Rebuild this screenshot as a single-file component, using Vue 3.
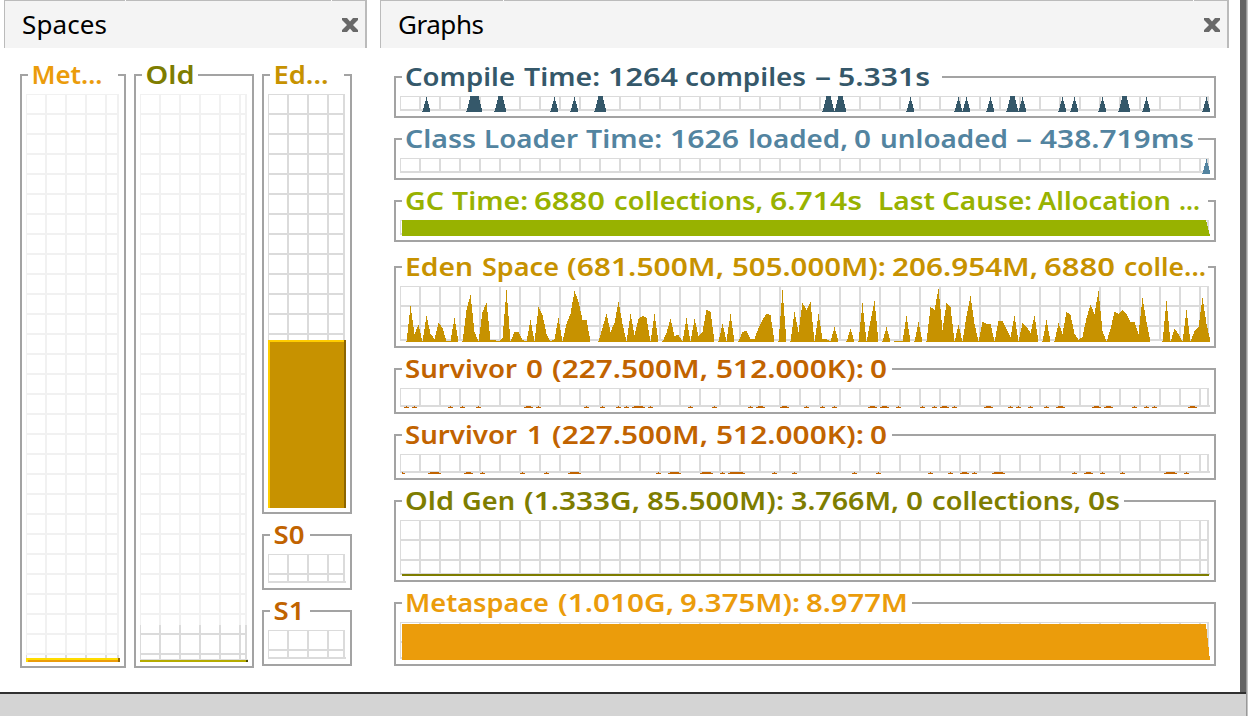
<script setup>
const run = (x0, vals) => vals.map((v, i) => [x0 - 400 + i * 4, v])

const edenSamples = [
  ...run(406, [0, 36, 8, 17, 0, 26, 8, 3, 19, 14, 0, 1, 24, 0, 0, 32, 47, 10, 0, 30, 39, 2, 2, 0, 4, 52, 0, 10, 10, 2, 0, 22, 0, 35, 27, 8, 0, 3, 24, 0, 18, 28, 51, 40, 22, 22, 0, 0, 0, 14, 28, 10, 19, 40, 18, 0, 28, 7, 23, 26, 24, 0, 28, 0, 0, 9, 23]),
  ...run(674, [6, 7, 0, 24, 0, 23, 6, 10, 32, 30, 0, 0, 18, 1, 28, 0, 0, 10, 11, 3, 3, 14, 22, 28, 27, 0, 0, 52, 0, 0, 30, 10, 39, 32, 40, 0, 28, 3, 3, 0, 15, 0, 0, 0, 13, 0, 0, 39, 0, 21, 41, 0, 0, 15, 0, 0, 1, 0, 26, 0, 0, 20, 0, 0, 35, 32, 53, 12]),
  ...run(946, [39, 35, 0, 17, 0, 26, 46, 18, 0, 20, 18, 18, 0, 21, 21, 13, 5, 26, 0, 19, 15, 9, 26, 0, 0, 22, 0, 0, 19, 8, 30, 27, 8, 2, 5, 24, 37, 28, 51, 11, 0, 13, 30, 28, 32, 28, 20, 20, 8, 44, 20, 0, 0, 0, 0, 41, 0, 13, 8, 0, 32, 0, 11, 15, 44, 18, 0]),
]

// one pixel-wide column per x, interpolated between neighbouring samples
const area = (points, h) => {
  let d = ''
  for (let i = 0; i < points.length - 1; i++) {
    const [x, a] = points[i]
    const [next, b] = points[i + 1]
    if (!a && !b) continue
    for (let k = 0; k < next - x; k++) {
      const v = Math.max(1, Math.round(a + (b - a) * k / (next - x)))
      d += `M${x + k} ${h - v}h1V${h}h-1z`
    }
  }
  return d
}

// [first, last] x of every burst; a burst rises and falls over one 4px sample
const bursts = list => list.map(([a, b]) => {
  const s = a - 400, e = b - 400, top = b - a === 8 ? 15 : 16
  return area([[s, 0], [s + 4, top], ...(e - 4 > s + 4 ? [[e - 4, top]] : []), [e, 0]], 16)
}).join('')

// low bumps, two pixel rows high
const bumps = (list, h) => list.map(([a, b = a]) =>
  `M${a - 400} ${h - 2}h${b - a + 1}v1h-${b - a + 1}zM${Math.max(2, a - 402)} ${h - 1}H${b - 397}v1H${Math.max(2, a - 402)}z`).join('')

const compile = bursts([[422, 430], [466, 482], [494, 506], [550, 558], [570, 578], [594, 606], [822, 834], [834, 846], [906, 914], [954, 962], [962, 970], [986, 994], [1006, 1018], [1018, 1026], [1058, 1066], [1070, 1078], [1098, 1106], [1118, 1130], [1142, 1150], [1202, 1210]])
const s0 = bumps([[406], [414], [450], [462], [478], [526, 530], [538], [586], [602], [618], [626], [634, 642], [650], [690], [714], [750], [758, 762], [782, 786], [806], [822], [834], [870, 874], [882, 886], [898], [922], [934], [942, 946], [954], [986, 990], [1010], [1018], [1030], [1046], [1058, 1062], [1094, 1098], [1106, 1110], [1134], [1146], [1154], [1190, 1194]], 20)
const s1 = bumps([[402], [430, 438], [466, 470], [482], [522], [546], [570, 578], [658], [670, 678], [702, 710], [722], [730, 742], [774], [794], [854], [878], [930], [950], [962, 966], [974], [994, 1002], [1074], [1086, 1090], [1102], [1122], [1166, 1174], [1186]], 20)

const grid = (w, h, from = 0) => {
  let d = from ? '' : `M0 0H${w - 1}V1H0Z`
  d += `M0 ${from}h1V${h - 1}H0ZM${w - 3} ${from}h2V${h - 1}h-2Z`
  for (let x = 19; x < w - 3; x += 20) d += `M${x} ${from}h2V${h - 1}h-2Z`
  for (let y = 19; y < h - 3; y += 20) if (y >= from) d += `M0 ${y}H${w - 1}v2H0Z`
  return d + `M0 ${h - 3}H${w}v2H0Z`
}

// title words: [text, left, right]
const graphs = [
  { id: 'compile', t: [['Compile', 405, 515], ['Time:', 524, 600], ['1264', 608, 678], ['compiles', 685, 806], ['–', 815, 831], ['5.331s', 838, 930]], c: '#35586a', gap: 540, h: 16, d: compile },
  { id: 'loader', t: [['Class', 405, 476], ['Loader', 484, 578], ['Time:', 586, 662], ['1626', 670, 739], ['loaded,', 748, 848], ['0', 854, 871], ['unloaded', 880, 1008], ['–', 1016, 1032], ['438.719ms', 1040, 1194]], c: '#5384a0', gap: 796, h: 16, d: bursts([[1202, 1210]]) },
  { id: 'gc', t: [['GC', 405, 444], ['Time:', 452, 528], ['6880', 534, 605], ['collections,', 614, 763], ['6.714s', 770, 862], ['', 866, 867], ['Last', 878, 935], ['Cause:', 942, 1032], ['Allocation', 1038, 1171], ['...', 1179, 1200]], c: '#98b200', gap: 806, h: 16, d: 'M2 0H806L810 16H2Z' },
  { id: 'eden', t: [['Eden', 405, 473], ['Space', 482, 559], ['(681.500M,', 567, 724], ['505.000M):', 732, 886], ['206.954M,', 892, 1038], ['6880', 1044, 1115], ['colle...', 1124, 1206]], c: '#c79200', gap: 806, h: 56, d: area(edenSamples, 56), far: true },
  { id: 's0', t: [['Survivor', 405, 517], ['0', 526, 543], ['(227.500M,', 552, 708], ['512.000K):', 716, 864], ['0', 870, 887]], c: '#c16300', gap: 490, h: 20, d: s0 },
  { id: 's1', t: [['Survivor', 405, 517], ['1', 527, 543], ['(227.500M,', 552, 708], ['512.000K):', 716, 864], ['0', 870, 887]], c: '#c16300', gap: 490, h: 20, d: s1 },
  { id: 'old', t: [['Old', 405, 454], ['Gen', 462, 515], ['(1.333G,', 524, 640], ['85.500M):', 647, 784], ['3.766M,', 791, 899], ['0', 906, 923], ['collections,', 932, 1081], ['0s', 1088, 1120]], c: '#7e7d00', gap: 722, h: 56, d: 'M2 54H809V56H2Z' },
  { id: 'meta', t: [['Metaspace', 405, 549], ['(1.010G,', 558, 674], ['9.375M):', 680, 800], ['8.977M', 806, 908]], c: '#eb9c0b', gap: 510, h: 38, d: 'M2 2H806L810 38H2Z' },
].map(g => ({ ...g, t: g.t.filter(w => w[0]) }))

const columns = [
  [{ t: 'Met...', c: '#eb9c0b', gap: 90, tw: 71, w: 94, h: 568, from: 561, top: 564, hi: '#ffdc00', lo: '#946800' }],
  [{ t: 'Old', c: '#7e7d00', gap: 56, tw: 49, w: 108, h: 568, from: 531, top: 566, hi: '#b5ab00', lo: '#4b4b00' }],
  [
    { t: 'Ed...', c: '#c79200', gap: 74, tw: 55, w: 78, h: 414, top: 246, hi: '#ffcd00', lo: '#8c6500' },
    { t: 'S0', c: '#c16300', gap: 40, tw: 31, w: 78, h: 30 },
    { t: 'S1', c: '#c16300', gap: 40, tw: 31, w: 78, h: 30 },
  ],
]
const cross = 'M0 0H5L8 3.5L11 0H16V2L11 7L16 12V14H11L8 10.5L5 14H0V12L5 7L0 2Z'
</script>

<template>
  <div class="window">
    <main class="workspace">
      <section class="panel spaces">
        <header class="tab">
          <h2><svg width="90" height="46"><text x="0" y="33" textLength="85">Spaces</text></svg></h2>
          <svg class="close" width="16" height="14" viewBox="0 0 16 14"><path :d="cross" /></svg>
        </header>
        <div class="columns">
          <div v-for="(col, i) in columns" :key="i" class="column">
            <fieldset v-for="b in col" :key="b.t">
              <legend><svg :width="b.gap" height="26"><text x="3.5" y="22" :textLength="b.tw" lengthAdjust="spacingAndGlyphs" :fill="b.c">{{ b.t }}</text></svg></legend>
              <svg class="chart" :width="b.w" :height="b.h">
                <path :d="grid(b.w, b.h)" :class="b.from ? 'reserved' : 'grid'" />
                <path v-if="b.from" :d="grid(b.w, b.h, b.from)" class="grid" />
                <template v-if="b.top">
                  <rect :y="b.top" :width="b.w" :height="b.h - b.top" :fill="b.hi" />
                  <rect x="2" :y="b.top + 2" :width="b.w - 4" :height="b.h - b.top - 2" :fill="b.c" />
                  <rect :x="b.w - 2" :y="b.top" width="2" :height="b.h - b.top" :fill="b.lo" />
                </template>
              </svg>
            </fieldset>
          </div>
        </div>
      </section>
      <section class="panel graphs">
        <header class="tab">
          <h2><svg width="90" height="46"><text x="0" y="33" textLength="86">Graphs</text></svg></h2>
          <svg class="close" width="16" height="14" viewBox="0 0 16 14"><path :d="cross" /></svg>
        </header>
        <div class="rows">
          <fieldset v-for="g in graphs" :key="g.id" :class="{ far: g.far }">
            <legend><svg :width="g.gap" height="26" :fill="g.c"><text v-for="(w, i) in g.t" :key="i" y="22" :x="w[1] - 402" :textLength="w[2] - w[1]" lengthAdjust="spacingAndGlyphs">{{ w[0] }}</text></svg></legend>
            <svg class="chart" width="810" :height="g.h">
              <path :d="grid(810, g.h)" class="grid" />
              <path :d="g.d" :fill="g.c" />
            </svg>
          </fieldset>
        </div>
      </section>
      <div class="edge"></div>
    </main>
    <footer class="status"></footer>
  </div>
</template>

<style>
body { margin: 0; overflow: hidden; }
</style>

<style scoped>
.window {
  width: 1248px;
  height: 716px;
  box-sizing: border-box;
  display: flex;
  flex-direction: column;
  overflow: hidden;
  background: #fff;
  border-right: 1px solid #c4c4c4;
  box-shadow: inset -1px 0 #999;
  font-family: "Noto Sans", "Open Sans", sans-serif;
  font-size: 26px;
}
svg { display: block; overflow: visible; }
.workspace { height: 692px; display: flex; padding-left: 4px; box-sizing: border-box; }
.spaces { width: 363px; margin-right: 13px; --n1: 121px; --n2: 327px; }
.graphs { width: 849px; --n1: 123px; --n2: 813px; }
.tab {
  height: 48px;
  box-sizing: border-box;
  display: flex;
  justify-content: space-between;
  align-items: flex-start;
  background:
    linear-gradient(90deg, #bbb var(--n1), #fff var(--n1) calc(var(--n1) + 1px), #bbb calc(var(--n1) + 1px) var(--n2), #fff var(--n2) calc(var(--n2) + 1px), #bbb calc(var(--n2) + 1px)) 0 0 / 100% 1px no-repeat border-box,
    #f4f4f4;
  border: solid #bbb;
  border-width: 0 2px 0 1px;
  padding: 1px 7px 0 17px;
}
.tab h2 { margin: 0; font-weight: 400; font-size: 26px; }
.close { margin-top: 17px; fill: #696969; }
.columns { display: flex; gap: 8px; margin: 14px 0 0 16px; }
.column { display: flex; flex-direction: column; gap: 8px; }
.rows { display: flex; flex-direction: column; gap: 8px; margin: 16px 0 0 14px; width: 822px; }
fieldset { margin: 0; min-width: 0; border: 2px solid #a3a3a3; padding: 6px 4px 4px; }
fieldset.far { margin-top: 4px; }
legend { padding: 0; margin: 0 0 0 2px; height: 26px; font-weight: 600; }
.chart { shape-rendering: crispEdges; }
.grid { fill: #dbdbdb; }
.reserved { fill: #f1f1f1; }
.edge { width: 6px; margin-left: 11px; background: #646464; }
.status { flex: 1; border-top: 2px solid #303030; background: #d4d4d4; margin-right: 1px; }
</style>
